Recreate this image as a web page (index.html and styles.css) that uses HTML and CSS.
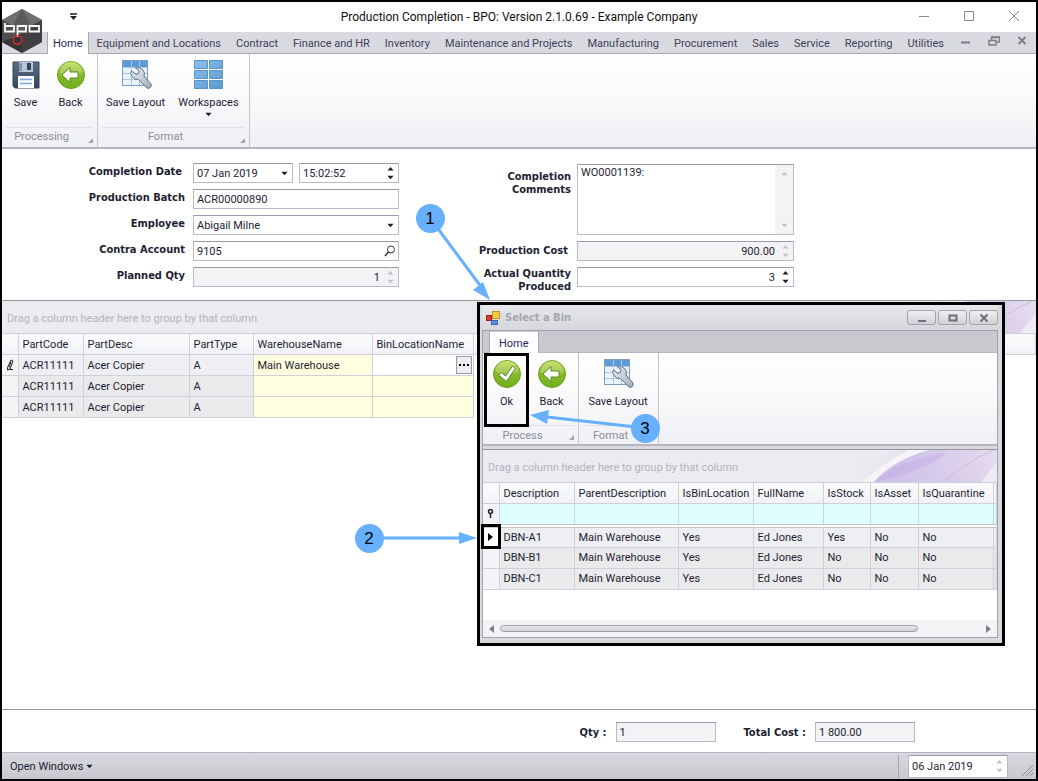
FILE: index.html
```html
<!DOCTYPE html>
<html lang="en">
<head>
<meta charset="utf-8">
<title>Production Completion</title>
<link rel="stylesheet" href="styles.css">
</head>
<body>
<svg class="defs" aria-hidden="true">
  <defs>
    <linearGradient id="g-green" x1="0" y1="0" x2="0" y2="1"><stop offset="0" stop-color="#bedc4c"/><stop offset=".5" stop-color="#86b92a"/><stop offset="1" stop-color="#6fb01c"/></linearGradient>
    <linearGradient id="g-blue" x1="0" y1="0" x2="1" y2="1"><stop offset="0" stop-color="#8cc0ea"/><stop offset="1" stop-color="#5a98d2"/></linearGradient>
    <linearGradient id="g-steel" x1="0" y1="0" x2="1" y2="1"><stop offset="0" stop-color="#eef2f6"/><stop offset="1" stop-color="#9fabb9"/></linearGradient>
    <linearGradient id="g-disk" x1="0" y1="0" x2="0" y2="1"><stop offset="0" stop-color="#5d6f86"/><stop offset="1" stop-color="#34445c"/></linearGradient>
    <linearGradient id="g-pink" x1="0" y1="0" x2="1" y2="0"><stop offset="0" stop-color="#ecebef" stop-opacity="0"/><stop offset="1" stop-color="#e6cbe6"/></linearGradient>
    <linearGradient id="g-violet" x1="0" y1="0" x2="1" y2="0"><stop offset="0" stop-color="#cdbdea"/><stop offset=".4" stop-color="#d3c7ea"/><stop offset="1" stop-color="#e4dcee"/></linearGradient>
    <linearGradient id="g-lilac" x1="0" y1="1" x2="1" y2="0"><stop offset="0" stop-color="#d3c2e4"/><stop offset="1" stop-color="#eadff0"/></linearGradient>
    <symbol id="i-save" viewBox="0 0 32 32">
      <path d="M3 3h26v26H5l-2-2z" fill="url(#g-disk)" stroke="#35445a"/>
      <rect x="9" y="3" width="14" height="10" fill="#b9c6d8"/><rect x="17" y="4" width="4" height="7" fill="#33435b"/>
      <rect x="9" y="4" width="3" height="8" fill="#7f93ae"/>
      <rect x="8" y="17" width="16" height="12" fill="#fff"/><path d="M10 20.500h12M10 24.500h12" stroke="#7aa9dc" stroke-width="1.500"/>
    </symbol>
    <symbol id="i-back" viewBox="0 0 32 32">
      <circle cx="16" cy="16" r="13.500" fill="url(#g-green)" stroke="#6c9c1e"/>
      <path d="M4.500 14a11.500 11.500 0 0 1 23 0q-11 4-23 0z" fill="#fff" opacity=".2"/>
      <path d="M7 16l8-7.500v4.500h8v6h-8v4.500z" fill="#fff" stroke="#5a8a1c"/>
    </symbol>
    <symbol id="i-ok" viewBox="0 0 32 32">
      <circle cx="16" cy="16" r="13.500" fill="url(#g-green)" stroke="#6c9c1e"/>
      <path d="M4.500 14a11.500 11.500 0 0 1 23 0q-11 4-23 0z" fill="#fff" opacity=".2"/>
      <path d="M7.500 17l3-2.500 4 3.500 7-10 3 2-9 13.500z" fill="#fff" stroke="#5a8a1c"/>
    </symbol>
    <symbol id="i-layout" viewBox="0 0 32 32">
      <rect x="2.500" y="1.500" width="25" height="25" fill="#eaf3fb" stroke="#7a9fc6"/>
      <rect x="3" y="2" width="24" height="6" fill="#5c9bd8"/>
      <path d="M11.500 2v24M19.500 2v24M3 8.500h24M3 14.500h24M3 20.500h24" stroke="#a9c8e4" fill="none"/>
      <path d="M11.500 12l4.500 3.500 2.500-1 .5-3-3.500-2.500q4-1.500 7 1.500t1.500 6.500l7 8q1 3-1.500 4t-3.500-1l-7.500-7.500q-4 .5-6.500-3t-.5-5.500z" fill="url(#g-steel)" stroke="#5f7085"/>
    </symbol>
    <symbol id="i-tiles" viewBox="0 0 32 32">
      <path d="M1.500 1.500h13v8h-13zM16.500 1.500h13v8h-13zM1.500 11.500h13v8h-13zM16.500 11.500h13v8h-13zM1.500 21.500h13v8h-13zM16.500 21.500h13v8h-13z" fill="url(#g-blue)" stroke="#5b92c6"/>
    </symbol>
    <symbol id="i-down" viewBox="0 0 8 5"><path d="M.5.500h7L4 4.500z" fill="currentColor"/></symbol>
    <symbol id="i-spin" viewBox="0 0 8 16"><path d="M.5 5L4 1l3.500 4zM.5 11h7L4 15z" fill="currentColor"/></symbol>
    <symbol id="i-corner" viewBox="0 0 6 6"><path d="M6 0v6H0z" fill="#a3a4ac"/></symbol>
    <symbol id="i-swoosh" viewBox="0 0 180 32">
      <path d="M0 32Q60 24 92 0h-10Q30 14 0 20z" fill="url(#g-pink)" opacity=".3"/>
      <path d="M20 32Q70 18 88 0h6Q80 18 50 32z" fill="url(#g-pink)" opacity=".9"/>
      <path d="M44 32Q66 14 90 0h20Q76 14 56 32z" fill="#f4f4f8"/>
      <path d="M57 32Q76 10 112 0h68v32z" fill="url(#g-violet)"/>
      <path d="M57 32Q82 10 130 2Q112 20 57 32z" fill="#c0aee6" opacity=".5"/>
      <path d="M124 32Q146 12 180 2v30z" fill="url(#g-lilac)" opacity=".55"/>
      <path d="M126 32Q146 14 176 0" fill="none" stroke="#bfa8d8" opacity=".6"/>
      <path d="M164 32L180 12v20z" fill="#f0eaf4"/>
    </symbol>
  </defs>
</svg>

<div class="app">
  <header class="titlebar">
    <button class="quick" aria-label="Customize quick access"><svg width="9" height="8" viewBox="0 0 9 8"><path d="M1 1h7" stroke="#222" stroke-width="1.500"/><path d="M1 3h7L4.500 7z" fill="#222"/></svg></button>
    <h1 class="title">Production Completion - BPO: Version 2.1.0.69 - Example Company</h1>
    <div class="winbtns">
      <button aria-label="Minimize"><svg width="12" height="12" viewBox="0 0 12 12"><path d="M1 6.500h10" stroke="#8a8a8a"/></svg></button>
      <button aria-label="Maximize"><svg width="12" height="12" viewBox="0 0 12 12"><path d="M1.500 1.500h9v9h-9z" fill="none" stroke="#8a8a8a"/></svg></button>
      <button aria-label="Close"><svg width="12" height="12" viewBox="0 0 12 12"><path d="M1 1l10 10M11 1L1 11" stroke="#8a8a8a"/></svg></button>
    </div>
  </header>
  <svg class="logo" width="42" height="46" viewBox="0 0 42 46" role="img" aria-label="bpo">
    <path d="M20 1l20 11v22L20 45 0 34V12z" fill="#4e4e50"/>
    <path d="M20 1l20 11-20 10L0 12z" fill="#6e6e70"/><path d="M40 12v22L20 45V24z" fill="#404042"/><path d="M20 1l8 15-8 6-9-5z" fill="#5a5a5c"/><path d="M0 34l20-8v19z" fill="#353537"/>
    <g fill="none" stroke="#fff" stroke-width="1.800"><path d="M3 15v8.500h9V18H3M15.500 29V18h8.500v5.500h-8.500M27.500 18H37v5.500h-9.500z"/></g>
    <path d="M11 30l4-2.500 4 1.500 1 4-3 3.500-5-1z" fill="none" stroke="#e02a2a" stroke-width="1.300"/>
  </svg>

  <nav class="tabs">
    <a class="tab active" href="#">Home</a><a class="tab" href="#">Equipment and Locations</a><a class="tab" href="#">Contract</a><a class="tab" href="#">Finance and HR</a><a class="tab" href="#">Inventory</a><a class="tab" href="#">Maintenance and Projects</a><a class="tab" href="#">Manufacturing</a><a class="tab" href="#">Procurement</a><a class="tab" href="#">Sales</a><a class="tab" href="#">Service</a><a class="tab" href="#">Reporting</a><a class="tab" href="#">Utilities</a>
    <div class="mdibtns">
      <button aria-label="Minimize child"><svg width="12" height="12" viewBox="0 0 12 12"><path d="M1 7.500h9" stroke="#7c7d8a" stroke-width="2"/></svg></button>
      <button aria-label="Restore child"><svg width="12" height="12" viewBox="0 0 12 12"><path d="M3.500 5V2h8v5H9" fill="none" stroke="#7c7d8a" stroke-width="1.500"/><path d="M1 5.500h7V10H1zM3.500 2.500h8" fill="none" stroke="#7c7d8a" stroke-width="1.500"/></svg></button>
      <button aria-label="Close child"><svg width="12" height="12" viewBox="0 0 12 12"><path d="M2.500 2l7 7M9.500 2l-7 7" stroke="#7c7d8a" stroke-width="2"/></svg></button>
    </div>
  </nav>

  <section class="ribbon">
    <div class="group">
      <div class="tools">
        <button class="tool"><svg><use href="#i-save"/></svg>Save</button>
        <button class="tool"><svg><use href="#i-back"/></svg>Back</button>
      </div>
      <div class="caption">Processing<svg class="corner"><use href="#i-corner"/></svg></div>
    </div>
    <div class="group">
      <div class="tools">
        <button class="tool wide"><svg><use href="#i-layout"/></svg>Save Layout</button>
        <button class="tool wide"><svg><use href="#i-tiles"/></svg>Workspaces<svg class="drop"><use href="#i-down"/></svg></button>
      </div>
      <div class="caption">Format<svg class="corner"><use href="#i-corner"/></svg></div>
    </div>
  </section>

  <form class="form">
    <div class="col left">
      <label class="inset" for="date">Completion Date</label>
      <div class="pair">
        <div class="box"><select id="date"><option>07 Jan 2019</option></select><svg class="arrow"><use href="#i-down"/></svg></div>
        <div class="box"><input id="time" aria-label="Completion time" value="15:02:52"><svg class="spin"><use href="#i-spin"/></svg></div>
      </div>
      <label for="batch">Production Batch</label>
      <div class="box"><input id="batch" value="ACR00000890"></div>
      <label for="emp">Employee</label>
      <div class="box"><select id="emp"><option>Abigail Milne</option></select><svg class="arrow"><use href="#i-down"/></svg></div>
      <label for="contra">Contra Account</label>
      <div class="box"><input id="contra" value="9105"><svg class="search" viewBox="0 0 12 12"><circle cx="7" cy="4.500" r="3.500" fill="none" stroke="#333"/><path d="M4.500 7L1 11" stroke="#333" stroke-width="1.500"/></svg></div>
      <label for="planned">Planned Qty</label>
      <div class="box ro"><input id="planned" class="num" value="1" readonly><svg class="spin"><use href="#i-spin"/></svg></div>
    </div>
    <div class="col right">
      <label class="low" for="comments">Completion<br>Comments</label>
      <div class="box area"><textarea id="comments">WO0001139:</textarea><div class="vscroll"><svg class="flip"><use href="#i-down"/></svg><svg><use href="#i-down"/></svg></div></div>
      <label class="mid" for="cost">Production Cost</label>
      <div class="box ro"><input id="cost" class="num" value="900.00" readonly><svg class="spin"><use href="#i-spin"/></svg></div>
      <label for="actual">Actual Quantity<br>Produced</label>
      <div class="box"><input id="actual" class="num" value="3"><svg class="spin"><use href="#i-spin"/></svg></div>
    </div>
  </form>

  <main class="gridview">
    <div class="grouppanel"><span>Drag a column header here to group by that column</span><svg class="swoosh"><use href="#i-swoosh"/></svg></div>
    <table class="grid">
      <colgroup><col class="w16"><col class="w65"><col class="w106"><col class="w64"><col class="w119"><col class="w101"><col></colgroup>
      <thead><tr><th></th><th>PartCode</th><th>PartDesc</th><th>PartType</th><th>WarehouseName</th><th>BinLocationName</th><th></th></tr></thead>
      <tbody>
        <tr class="focus"><td class="ind"><svg width="8" height="12" viewBox="0 0 8 12"><path d="M5 1l2 1-3 8-2.500 1V8.500zM5 3L3 8.500M3 10.500h4" fill="none" stroke="#222"/></svg></td><td>ACR11111</td><td>Acer Copier</td><td>A</td><td class="y">Main Warehouse</td><td class="edit"><button aria-label="Select bin"><svg width="12" height="4" viewBox="0 0 12 4"><path d="M1 1h2v2H1zM5 1h2v2H5zM9 1h2v2H9z"/></svg></button></td><td class="blank"></td></tr>
        <tr><td class="ind"></td><td>ACR11111</td><td>Acer Copier</td><td>A</td><td class="y"></td><td class="y"></td><td class="blank"></td></tr>
        <tr><td class="ind"></td><td>ACR11111</td><td>Acer Copier</td><td>A</td><td class="y"></td><td class="y"></td><td class="blank"></td></tr>
      </tbody>
    </table>
  </main>

  <div class="totals">
    <label for="qty">Qty :</label><div class="box ro"><input id="qty" value="1" readonly></div>
    <label class="second" for="total">Total Cost :</label><div class="box ro"><input id="total" value="1 800.00" readonly></div>
  </div>

  <footer class="status">
    <button class="open">Open Windows<svg class="drop"><use href="#i-down"/></svg></button>
    <div class="statusdate"><div class="box"><input aria-label="Working date" value="06 Jan 2019"><svg class="spin"><use href="#i-spin"/></svg></div></div>
    <svg class="grip" width="14" height="14" viewBox="0 0 14 14"><path d="M2 13L13 2M6 13l7-7M10 13l3-3" stroke="#8d8e96" fill="none"/></svg>
  </footer>

  <section class="dialog">
    <div class="dtitle">
      <svg width="14" height="14" viewBox="0 0 14 14"><rect x="6.500" y=".5" width="7" height="7" fill="#f7c948" stroke="#c8901c"/><rect x=".5" y="4.500" width="5" height="5" fill="#d63a2a" stroke="#9a2418"/><rect x="5.500" y="9.500" width="6" height="4" fill="#5b8de0" stroke="#3a68b8"/></svg>
      <h2>Select a Bin</h2>
      <button aria-label="Minimize dialog"><svg width="12" height="12" viewBox="0 0 12 12"><path d="M2 9h8" stroke="#6e6f78" stroke-width="2"/></svg></button>
      <button aria-label="Maximize dialog"><svg width="12" height="12" viewBox="0 0 12 12"><path d="M2.500 3.500h7v5h-7z" fill="none" stroke="#6e6f78" stroke-width="2"/></svg></button>
      <button aria-label="Close dialog"><svg width="12" height="12" viewBox="0 0 12 12"><path d="M2.500 2.500l7 7M9.500 2.500l-7 7" stroke="#6e6f78" stroke-width="2"/></svg></button>
    </div>
    <div class="dbody">
      <nav class="dtabs"><a class="tab active" href="#">Home</a></nav>
      <div class="ribbon">
        <div class="group process">
          <div class="tools">
            <button class="tool ok"><svg><use href="#i-ok"/></svg>Ok</button>
            <button class="tool"><svg><use href="#i-back"/></svg>Back</button>
          </div>
          <div class="caption">Process<svg class="corner"><use href="#i-corner"/></svg></div>
        </div>
        <div class="group">
          <div class="tools"><button class="tool wide"><svg><use href="#i-layout"/></svg>Save Layout</button></div>
          <div class="caption">Format<svg class="corner"><use href="#i-corner"/></svg></div>
        </div>
      </div>
      <div class="dgrid">
        <div class="grouppanel"><span>Drag a column header here to group by that column</span><svg class="swoosh"><use href="#i-swoosh"/></svg></div>
        <table class="grid">
          <colgroup><col class="w16"><col class="w75"><col class="w104"><col class="w75"><col class="w70"><col class="w47"><col class="w48"><col class="w75"><col></colgroup>
          <thead>
            <tr><th></th><th>Description</th><th>ParentDescription</th><th>IsBinLocation</th><th>FullName</th><th>IsStock</th><th>IsAsset</th><th>IsQuarantine</th><th></th></tr>
            <tr class="filter"><td class="ind"><svg width="7" height="9" viewBox="0 0 7 9"><circle cx="3.500" cy="2.500" r="2" fill="none" stroke="#222" stroke-width="1.500"/><path d="M3.500 4v5" stroke="#222" stroke-width="1.500"/></svg></td><td></td><td></td><td></td><td></td><td></td><td></td><td></td><td></td></tr>
          </thead>
          <tbody>
            <tr class="focus"><td class="ind current"><svg width="5" height="8" viewBox="0 0 5 8"><path d="M0 0l5 4-5 4z"/></svg></td><td>DBN-A1</td><td>Main Warehouse</td><td>Yes</td><td>Ed Jones</td><td>Yes</td><td>No</td><td>No</td><td></td></tr>
            <tr><td class="ind"></td><td>DBN-B1</td><td>Main Warehouse</td><td>Yes</td><td>Ed Jones</td><td>No</td><td>No</td><td>No</td><td></td></tr>
            <tr><td class="ind"></td><td>DBN-C1</td><td>Main Warehouse</td><td>Yes</td><td>Ed Jones</td><td>No</td><td>No</td><td>No</td><td></td></tr>
          </tbody>
        </table>
        <div class="hscroll"><svg width="5" height="8" viewBox="0 0 5 8"><path d="M5 0L0 4l5 4z" fill="#7d7e88"/></svg><div class="track"><div class="thumb"></div></div><svg width="5" height="8" viewBox="0 0 5 8"><path d="M0 0l5 4-5 4z" fill="#7d7e88"/></svg></div>
      </div>
    </div>
  </section>

  <svg class="notes" width="1038" height="781" viewBox="0 0 1038 781">
    <g stroke="#66b0ff" stroke-width="3"><path d="M430 218l52 70M369 538h96M645 428l-98-11"/></g>
    <g fill="#66b0ff"><path d="M490 300l-17-10 10-8zM477 538l-18 6v-12zM530 415l19-5-2 14z"/><circle cx="430.500" cy="218.500" r="14.500"/><circle cx="369.500" cy="538.500" r="14.500"/><circle cx="645.500" cy="428.500" r="14.500"/></g>
    <g class="noteno"><text x="430" y="224">1</text><text x="369" y="544">2</text><text x="645" y="434">3</text></g>
  </svg>
</div>
</body>
</html>
```
FILE: styles.css
```css
* { box-sizing: border-box; }
body { margin: 0; }
body, button, input, select, textarea { font-family: Roboto, "DejaVu Sans Condensed", sans-serif; font-size: 11px; color: #1e1e32; }
button { background: none; border: 0; padding: 0; }
a { color: inherit; text-decoration: none; }
h1, h2 { margin: 0; }
.defs { position: absolute; width: 0; height: 0; }
.app { position: relative; display: flex; flex-direction: column; min-height: 100vh; border: 2px solid #000; background: #fff; overflow: hidden; }

.titlebar { display: grid; grid-template-columns: 1fr auto 1fr; align-items: center; height: 30px; }
.quick { justify-self: start; margin-left: 67px; }
.title { font-size: 12px; font-weight: normal; color: #111; }
.winbtns { display: flex; justify-content: flex-end; }
.winbtns button { width: 45px; height: 28px; }
.logo { position: absolute; left: 0; top: 6px; }

.tabs { display: flex; height: 22px; padding-left: 45px; background: #d9dae0; border-bottom: 1px solid #a6a7b0; }
.tab { padding: 0 7px 0 8px; line-height: 24px; white-space: nowrap; color: #3f3f5a; }
.tab.active { height: 22px; padding: 0 5px; background: #fff; border-left: 1px solid #a6a7b0; border-right: 1px solid #a6a7b0; color: #1f2a5c; }
.mdibtns { display: flex; margin-left: auto; }
.mdibtns button { width: 28px; height: 21px; }

.ribbon { display: flex; height: 95px; background: linear-gradient(#fff, #f9f9fb 50%, #eff0f4); border-bottom: 2px solid #b4b5bd; }
.group { display: flex; flex-direction: column; border-right: 1px solid #c5c6cc; }
.tools { display: flex; flex: 1; min-height: 0; padding: 5px 4px 0 1px; }
.tool { display: flex; flex-direction: column; align-items: center; width: 45px; line-height: 16px; color: #1c1c34; white-space: nowrap; }
.tool.wide { width: 73px; }
.tool svg { width: 32px; height: 32px; margin-bottom: 4px; }
.tool svg.drop { width: 7px; height: 5px; margin: 1px 0 0; }
.caption { position: relative; margin: 0 4px; flex: none; height: 20px; line-height: 18px; border-top: 1px solid #e0e1e6; text-align: center; color: #8c8d99; padding-right: 16px; }
.corner { position: absolute; right: 0; bottom: 4px; width: 5px; height: 5px; }

.form { display: flex; gap: 0; padding: 14px 0 13px; }
.col { display: grid; align-content: start; row-gap: 6px; }
.left { grid-template-columns: 183px 206px; column-gap: 8px; }
.right { grid-template-columns: 172px 217px; column-gap: 6px; padding-top: 1px; }
.form label, .totals label, .dtitle h2 { font-family: "DejaVu Sans Condensed", sans-serif; font-weight: bold; }
.form label, .totals label { text-align: right; }
.left label { line-height: 18px; }
.left .inset { padding-right: 3px; }
.right label { line-height: 13px; height: 20px; }
.right .low { padding-top: 6px; }
.right .mid { padding: 3px 3px 0 0; }
.pair { display: grid; grid-template-columns: 1fr 1fr; gap: 6px; }
.box { display: flex; align-items: center; height: 20px; border: 1px solid #b9bac6; border-top-color: #9a9ba8; background: #fff; }
.box input, .box select, .box textarea { flex: 1; min-width: 0; width: 100%; height: 100%; margin: 0; padding: 0 3px; border: 0; outline: 0; background: transparent; appearance: none; resize: none; }
.box .num { text-align: right; }
.ro { background: #f3f3f6; }
.arrow { width: 7px; height: 5px; margin-right: 4px; }
.spin { width: 7px; height: 16px; margin: 0 4px; }
.ro .spin, .status .spin { color: #c2c3ca; }
.search { width: 12px; height: 12px; margin-right: 2px; }
.area { height: 71px; }
.area textarea { line-height: 15px; padding: 0 3px; }
.vscroll { display: flex; flex-direction: column; justify-content: space-between; align-items: center; width: 18px; height: 100%; padding: 6px 0; background: #f3f3f6; color: #c2c3ca; }
.vscroll svg { width: 7px; height: 5px; }
.flip { transform: rotate(180deg); }

.gridview { flex: 1; border-top: 1px solid #94959f; border-bottom: 1px solid #94959f; }
.grouppanel { display: flex; justify-content: space-between; align-items: center; height: 32px; padding-left: 5px; background: #ebecf0; color: #b3b4bc; overflow: hidden; }
.grouppanel span { padding-top: 2px; }
.swoosh { width: 180px; height: 32px; }
.grid { width: 100%; table-layout: fixed; border-collapse: collapse; }
.grid th, .grid td { height: 21px; padding: 1px 4px 0; line-height: 18px; border: 1px solid #d0d0da; text-align: left; font-weight: normal; white-space: nowrap; overflow: hidden; }
.grid td { background: #eaeaec; }
.grid .focus td { background: #eeeff2; }
.grid th { background: linear-gradient(#fbfbfd, #f1f2f5); }
.grid th:first-child, .grid td:first-child { border-left: 0; }
.grid .ind, .grid .focus .ind { padding: 0; text-align: center; background: #f4f4f7; }
.ind svg { display: block; margin: auto; }
.grid .y, .grid .focus .y { background: #feffde; }
.grid td.blank, .grid .focus .blank { background: #fff; border-right: 0; border-top-color: #fff; border-bottom-color: #fff; }
.grid .focus .edit { background: #fff; padding: 0 1px; }
.edit button { display: flex; align-items: center; justify-content: center; width: 16px; height: 18px; margin-left: auto; border: 1px solid #9a9ba8; background: #eeeff2; }
.w16 { width: 16px; } .w47 { width: 47px; } .w48 { width: 48px; } .w64 { width: 64px; } .w65 { width: 65px; } .w70 { width: 70px; }
.w75 { width: 75px; } .w101 { width: 101px; } .w104 { width: 104px; } .w106 { width: 106px; } .w119 { width: 119px; }

.totals { display: flex; justify-content: flex-end; align-items: center; gap: 9px; height: 42px; padding: 2px 121px 0 0; }
.totals .box { width: 100px; }
.totals .second { margin-left: 19px; }
.status { display: flex; align-items: center; height: 27px; padding: 0 2px 0 8px; border-top: 1px solid #b4b5bd; background: linear-gradient(#d8d9de, #c8c9cf); }
.open { display: flex; align-items: center; gap: 3px; }
.open .drop { width: 7px; height: 5px; }
.statusdate { margin-left: auto; padding-left: 9px; border-left: 1px solid #a6a7b0; }
.status .box { width: 100px; height: 23px; }
.grip { margin: 8px 0 0 12px; }

.dialog { position: absolute; left: 475px; top: 300px; width: 528px; height: 344px; display: flex; flex-direction: column; padding: 0 4px 5px 2px; border: 3px solid #000; background: #d9dadf; }
.dtitle { display: flex; align-items: center; height: 25px; padding: 0 0 0 4px; background: linear-gradient(#e6e7ea, #d6d7dc); }
.dtitle h2 { flex: 1; margin-left: 5px; font-size: 11px; color: #a6a7b1; }
.dtitle button { display: flex; align-items: center; justify-content: center; width: 29px; height: 15px; margin-left: 2px; border: 1px solid #a2a3ab; border-radius: 3px; background: linear-gradient(#f0f0f3, #d0d1d6); }
.dbody { flex: 1; display: flex; flex-direction: column; border: 1px solid #a2a3ab; }
.dtabs { display: flex; height: 22px; padding-left: 6px; background: #c8c9ce; border-bottom: 1px solid #b4b5bd; }
.dtabs .tab.active { margin-top: 1px; padding: 0 9px; }
.dialog .ribbon { height: 93px; }
.dialog .caption { height: 19px; line-height: 19px; }
.dialog .tools { padding: 0 4px 0 1px; }
.dialog .tool { padding-top: 5px; }
.dialog .tool.wide { width: 72px; margin-left: 2px; }
.dialog .ok { position: relative; z-index: 1; height: 74px; padding-top: 2px; border: 3px solid #000; }
.dgrid { flex: 1; display: flex; flex-direction: column; margin-top: 3px; border-top: 1px solid #94959f; background: #fff; }
.dgrid .filter td { height: 22px; background: #dfffff; border-bottom: 4px double #c4c5cc; }
.dgrid .filter .ind { background: #f4f4f7; }
.dgrid .focus .current { outline: 3px solid #000; outline-offset: -1px; background: #fff; }
.hscroll { display: flex; align-items: center; gap: 6px; height: 17px; margin-top: auto; padding: 0 6px; background: #f3f3f6; }
.track { flex: 1; }
.thumb { width: 87%; height: 7px; border: 1px solid #9d9ea7; border-radius: 4px; background: linear-gradient(#e8e8ec, #cfd0d5); }

.notes { position: absolute; left: -2px; top: -2px; pointer-events: none; }
.noteno { font: 17px "Liberation Sans", sans-serif; text-anchor: middle; fill: #000; }
```
